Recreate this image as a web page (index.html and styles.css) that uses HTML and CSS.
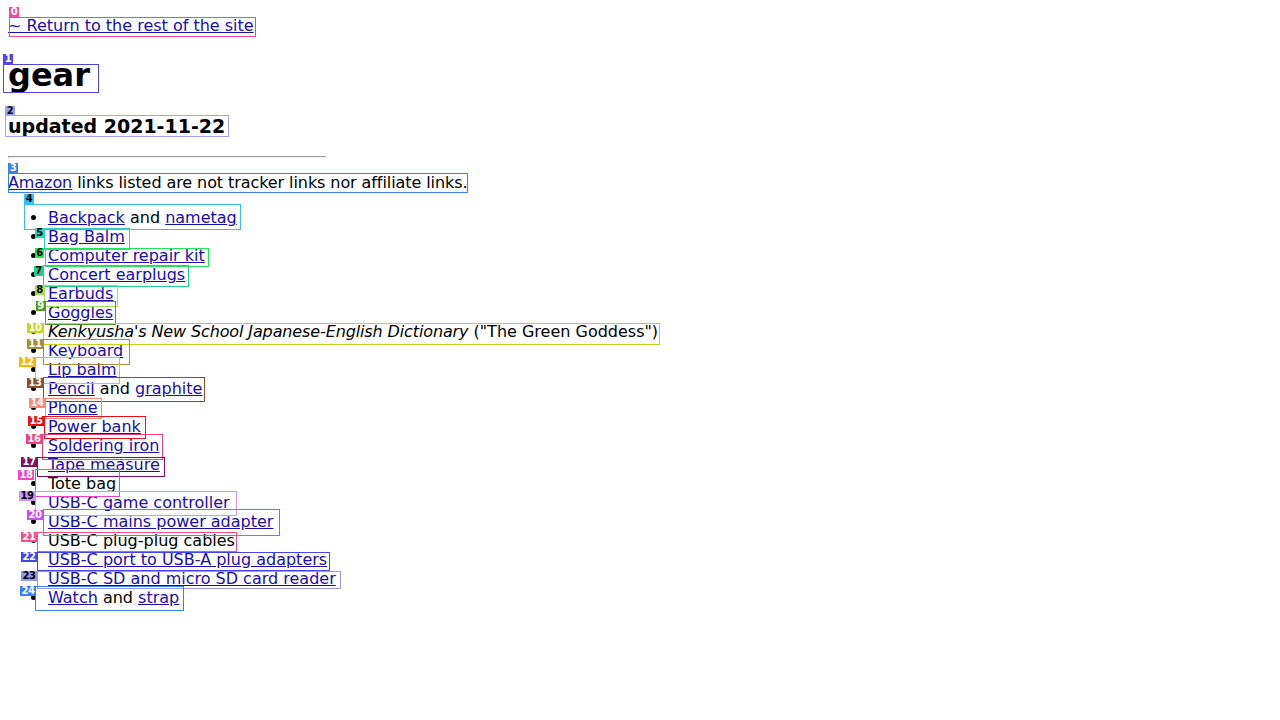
FILE: index.html
```html
<!DOCTYPE html>
<html lang="en">
<head>
<meta charset="utf-8">
<title>gear</title>
<link rel="stylesheet" href="styles.css">
</head>
<body>
<p class="back"><a href="#">~ Return to the rest of the site</a></p>
<h1 class="title">gear</h1>
<h2 class="updated">updated 2021-11-22</h2>
<hr class="rule">
<p class="note"><a href="#">Amazon</a> links listed are not tracker links nor affiliate links.</p>
<ul class="gear-list">
  <li><a href="#">Backpack</a> and <a href="#">nametag</a></li>
  <li><a href="#">Bag Balm</a></li>
  <li><a href="#">Computer repair kit</a></li>
  <li><a href="#">Concert earplugs</a></li>
  <li><a href="#">Earbuds</a></li>
  <li><a href="#">Goggles</a></li>
  <li><i class="book">Kenkyusha's New School Japanese-English Dictionary</i> ("The Green Goddess")</li>
  <li><a href="#">Keyboard</a></li>
  <li><a href="#">Lip balm</a></li>
  <li><a href="#">Pencil</a> and <a href="#">graphite</a></li>
  <li><a href="#">Phone</a></li>
  <li><a href="#">Power bank</a></li>
  <li><a href="#">Soldering iron</a></li>
  <li><a href="#">Tape measure</a></li>
  <li>Tote bag</li>
  <li><a href="#">USB-C game controller</a></li>
  <li><a href="#">USB-C mains power adapter</a></li>
  <li>USB-C plug-plug cables</li>
  <li><a href="#">USB-C port to USB-A plug adapters</a></li>
  <li><a href="#">USB-C SD and micro SD card reader</a></li>
  <li><a href="#">Watch</a> and <a href="#">strap</a></li>
</ul>

<div class="marks" aria-hidden="true">
  <div class="box b0"></div><span class="tag t0">0</span>
  <div class="box b1"></div><span class="tag t1">1</span>
  <div class="box b2"></div><span class="tag t2">2</span>
  <div class="box b3"></div><span class="tag t3">3</span>
  <div class="box b4"></div><span class="tag t4">4</span>
  <div class="box b5"></div><span class="tag t5">5</span>
  <div class="box b6"></div><span class="tag t6">6</span>
  <div class="box b7"></div><span class="tag t7">7</span>
  <div class="box b8"></div><span class="tag t8">8</span>
  <div class="box b9"></div><span class="tag t9">9</span>
  <div class="box b10"></div><span class="tag t10">10</span>
  <div class="box b11"></div><span class="tag t11">11</span>
  <div class="box b12"></div><span class="tag t12">12</span>
  <div class="box b13"></div><span class="tag t13">13</span>
  <div class="box b14"></div><span class="tag t14">14</span>
  <div class="box b15"></div><span class="tag t15">15</span>
  <div class="box b16"></div><span class="tag t16">16</span>
  <div class="box b17"></div><span class="tag t17">17</span>
  <div class="box b18"></div><span class="tag t18">18</span>
  <div class="box b19"></div><span class="tag t19">19</span>
  <div class="box b20"></div><span class="tag t20">20</span>
  <div class="box b21"></div><span class="tag t21">21</span>
  <div class="box b22"></div><span class="tag t22">22</span>
  <div class="box b23"></div><span class="tag t23">23</span>
  <div class="box b24"></div><span class="tag t24">24</span>
</div>
</body>
</html>
```
FILE: styles.css
```css
html, body {
  background: #ffffff;
}
body {
  margin: 0;
  padding: 8px;
  font-family: "DejaVu Sans", sans-serif;
  font-size: 16px;
  line-height: 19px;
  color: #000000;
}
a {
  color: #1a0dab;
}
.back {
  margin: 8px 0 16px;
}
.title {
  font-size: 32px;
  line-height: 38px;
  margin: 21px 0;
}
.updated {
  font-size: 19px;
  line-height: 22px;
  margin: 19px 0;
}
.rule {
  width: 25%;
  margin: 0;
}
.note {
  margin: 15px 0 16px;
  letter-spacing: -0.08px;
}
.book {
  letter-spacing: -0.12px;
}
.gear-list {
  margin: 16px 0;
  padding-left: 40px;
}

/* annotation overlay */
.marks {
  position: absolute;
  top: 0;
  left: 0;
  width: 0;
  height: 0;
}
.box {
  position: absolute;
  box-sizing: border-box;
  border: 1px solid;
}
.tag {
  position: absolute;
  height: 10px;
  min-width: 10px;
  padding: 0;
  box-sizing: border-box;
  font: bold 10px/10px "DejaVu Sans", sans-serif;
  letter-spacing: -0.5px;
  text-align: center;
  color: #ffffff;
}

.b0 { left: 9px; top: 17px; width: 247px; height: 20px; border-color: #ec4899; }
.t0 { left: 9px; top: 7px; background: #f04c9c; }
.b1 { left: 3px; top: 64px; width: 96px; height: 29px; border-color: #4f46e5; }
.t1 { left: 3px; top: 54px; background: #4f46f0; }
.b2 { left: 5px; top: 115px; width: 224px; height: 22px; border-color: #a5a0f5; }
.t2 { left: 5px; top: 106px; background: #a5a0f5; color: #000; }
.b3 { left: 8px; top: 173px; width: 460px; height: 20px; border-color: #3b7ff0; }
.t3 { left: 8px; top: 163px; background: #3b7ff0; }
.b4 { left: 24px; top: 204px; width: 217px; height: 26px; border-color: #38bdf8; }
.t4 { left: 24px; top: 194px; background: #38bdf8; color: #000; }
.b5 { left: 44px; top: 228px; width: 86px; height: 22px; border-color: #2dd4bf; }
.t5 { left: 35px; top: 228px; background: #2dd4bf; color: #000; min-width: 9px; }
.b6 { left: 45px; top: 248px; width: 164px; height: 19px; border-color: #22e55e; }
.t6 { left: 35px; top: 248px; background: #22e55e; color: #000; min-width: 9px; }
.b7 { left: 43px; top: 265px; width: 146px; height: 22px; border-color: #20d08f; }
.t7 { left: 34px; top: 266px; background: #20d08f; color: #000; min-width: 9px; }
.b8 { left: 44px; top: 285px; width: 74px; height: 22px; border-color: #a3e05a; }
.t8 { left: 35px; top: 285px; background: #a3e05a; color: #000; min-width: 9px; }
.b9 { left: 45px; top: 301px; width: 71px; height: 24px; border-color: #4d9a2a; }
.t9 { left: 36px; top: 301px; background: #4d9a2a; min-width: 9px; }
.b10 { left: 43px; top: 323px; width: 617px; height: 22px; border-color: #c4d61a; }
.t10 { left: 27px; top: 323px; background: #c4d61a; width: 16px; }
.b11 { left: 43px; top: 339px; width: 87px; height: 26px; border-color: #a3903a; }
.t11 { left: 27px; top: 339px; background: #a3903a; width: 16px; }
.b12 { left: 35px; top: 357px; width: 85px; height: 27px; border-color: #f5b800; }
.t12 { left: 19px; top: 357px; background: #f5b800; width: 16px; }
.b13 { left: 43px; top: 377px; width: 162px; height: 25px; border-color: #8f4a32; }
.t13 { left: 27px; top: 378px; background: #8f4a32; width: 16px; }
.b14 { left: 45px; top: 398px; width: 57px; height: 21px; border-color: #f58a78; }
.t14 { left: 29px; top: 398px; background: #f58a78; width: 16px; }
.b15 { left: 44px; top: 416px; width: 102px; height: 23px; border-color: #e81010; }
.t15 { left: 28px; top: 416px; background: #e81010; width: 16px; }
.b16 { left: 42px; top: 434px; width: 121px; height: 26px; border-color: #f2407e; }
.t16 { left: 26px; top: 434px; background: #f2407e; width: 16px; }
.b17 { left: 37px; top: 457px; width: 128px; height: 20px; border-color: #850e63; }
.t17 { left: 21px; top: 457px; background: #850e63; width: 16px; }
.b18 { left: 35px; top: 469px; width: 85px; height: 28px; border-color: #f043c6; }
.t18 { left: 18px; top: 470px; background: #f043c6; width: 16px; }
.b19 { left: 35px; top: 491px; width: 202px; height: 25px; border-color: #c89af5; }
.t19 { left: 19px; top: 491px; background: #c89af5; color: #000; width: 16px; }
.b20 { left: 43px; top: 509px; width: 237px; height: 27px; border-color: #c84df0; }
.t20 { left: 27px; top: 510px; background: #c84df0; width: 16px; }
.b21 { left: 37px; top: 532px; width: 200px; height: 20px; border-color: #f2508e; }
.t21 { left: 21px; top: 532px; background: #f2508e; width: 16px; }
.b22 { left: 37px; top: 552px; width: 293px; height: 19px; border-color: #4545f0; }
.t22 { left: 21px; top: 552px; background: #4545f0; width: 16px; }
.b23 { left: 37px; top: 571px; width: 304px; height: 18px; border-color: #9a98e8; }
.t23 { left: 21px; top: 571px; background: #9a98e8; color: #000; width: 16px; }
.b24 { left: 35px; top: 586px; width: 149px; height: 25px; border-color: #3b7ff0; }
.t24 { left: 20px; top: 586px; background: #3b7ff0; width: 16px; }
```
